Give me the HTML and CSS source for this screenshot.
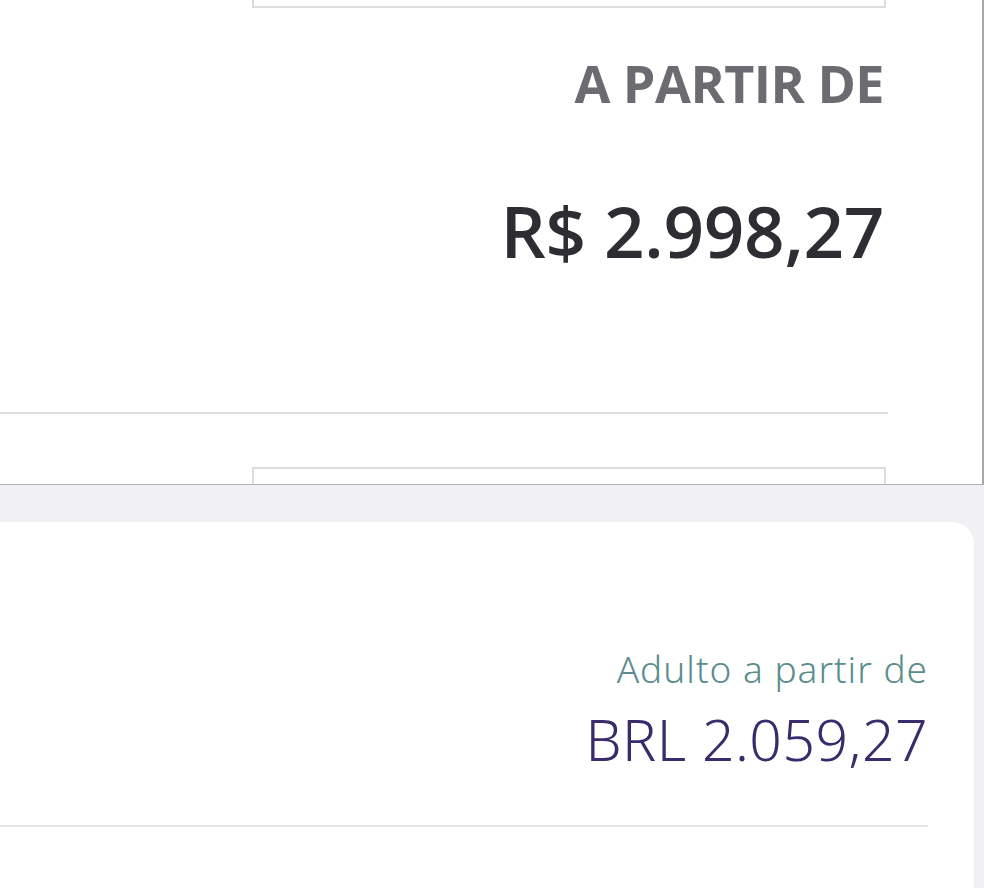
FILE: index.html
```html
<!DOCTYPE html>
<html lang="pt-BR">
<head>
    <meta charset="UTF-8">
    <meta name="viewport" content="width=device-width, initial-scale=1.0">
    <title>Tarifas</title>
    <link rel="stylesheet" href="styles.css">
</head>
<body>
    <div class="fare-panel">
        <div class="fare-box fare-box-end"></div>
        <div class="fare-price">
            <div class="fare-label">A PARTIR DE</div>
            <div class="fare-value">R$ 2.998,27</div>
        </div>
        <div class="fare-divider"></div>
        <div class="fare-box fare-box-start"></div>
    </div>
    <div class="offer-area">
        <div class="offer-card">
            <div class="offer-price">
                <div class="offer-label">Adulto a partir de</div>
                <div class="offer-value">BRL 2.059,27</div>
            </div>
            <div class="offer-divider"></div>
        </div>
    </div>
</body>
</html>
```

FILE: styles.css
```css
body {
    margin: 0;
    width: 984px;
    height: 888px;
    overflow: hidden;
    background: #f1f1f5;
}
.fare-panel {
    height: 485px;
    box-sizing: border-box;
    width: 984px;
    background: #fff;
    border-right: 2px solid #a8a8a8;
    border-bottom: 1px solid #b0b0b0;
    display: flex;
    flex-direction: column;
}
.fare-box {
    margin-left: 252px;
    width: 634px;
    box-sizing: border-box;
    border: 2px solid #dcdcdc;
}
.fare-box-end {
    height: 8px;
    border-top: none;
}
.fare-box-start {
    height: 17px;
    border-bottom: none;
    margin-top: 53px;
}
.fare-price {
    padding-right: 98px;
    text-align: right;
    font-family: "Open Sans", sans-serif;
}
.fare-label {
    margin-top: 41px;
    font-size: 52px;
    line-height: 68px;
    font-weight: 700;
    color: #6b6b71;
    letter-spacing: -0.5px;
}
.fare-value {
    margin-top: 66px;
    font-size: 71px;
    line-height: 96px;
    font-weight: 600;
    color: #2d2d33;
    letter-spacing: -0.3px;
}
.fare-divider {
    margin-top: auto;
    width: 888px;
    height: 2px;
    background: #dedede;
}
.offer-area {
    padding-top: 37px;
    padding-right: 10px;
}
.offer-card {
    height: 400px;
    background: #fff;
    border-top-right-radius: 22px;
    padding-top: 124px;
    box-sizing: border-box;
}
.offer-price {
    padding-right: 46px;
    text-align: right;
    font-family: "Noto Sans", sans-serif;
}
.offer-label {
    font-size: 37px;
    line-height: 46px;
    font-weight: 300;
    color: #5b8c8e;
    letter-spacing: 1px;
}
.offer-value {
    margin-top: 6px;
    font-size: 57px;
    line-height: 82px;
    font-weight: 300;
    color: #3a2c6c;
    letter-spacing: 0.5px;
}
.offer-divider {
    margin-top: 45px;
    width: 928px;
    height: 2px;
    background: #e6e6e6;
}
```
